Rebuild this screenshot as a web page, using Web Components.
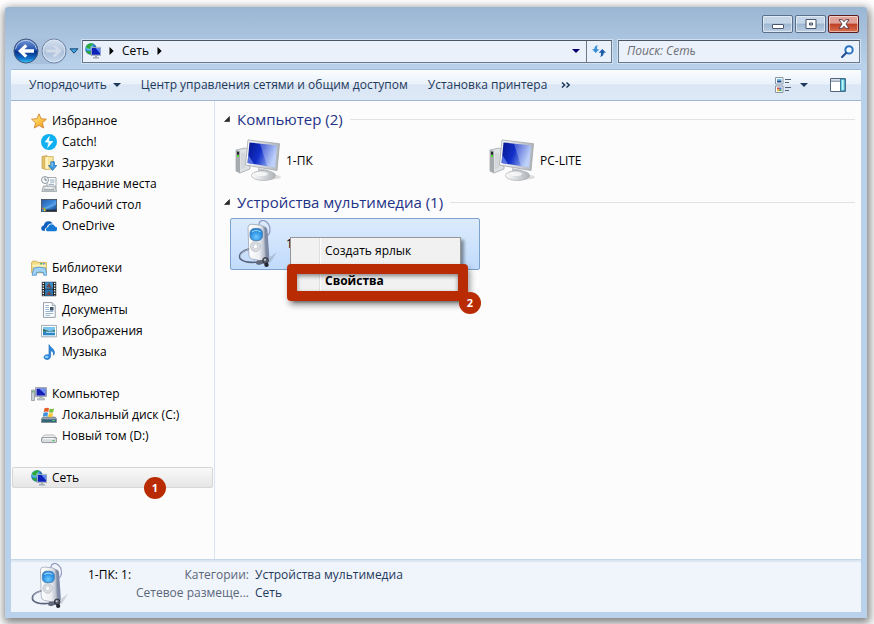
<!DOCTYPE html>
<html lang="ru">
<head>
<meta charset="utf-8">
<meta name="viewport" content="width=device-width">
<title>Сеть</title>
<style>
  html { height: 100%; }
  body {
    margin: 0; min-height: 100vh; box-sizing: border-box; padding: 7px 7px 6px 5px;
    display: flex; background: #fff; color: #000; overflow: hidden;
    font: 12px/16px "Open Sans", "Noto Sans", sans-serif;
  }
</style>
</head>
<body>
<explorer-window>
  <address-bar slot="address" place="Сеть"></address-bar>
  <command-bar slot="commands">
    <command-button menu>Упорядочить</command-button>
    <command-button>Центр управления сетями и общим доступом</command-button>
    <command-button>Установка принтера</command-button>
  </command-bar>
  <nav-tree slot="nav">
    <nav-group>
      <nav-item icon="star" root>Избранное</nav-item>
      <nav-item icon="bolt">Catch!</nav-item>
      <nav-item icon="downloads">Загрузки</nav-item>
      <nav-item icon="recent">Недавние места</nav-item>
      <nav-item icon="desktop">Рабочий стол</nav-item>
      <nav-item icon="cloud">OneDrive</nav-item>
    </nav-group>
    <nav-group>
      <nav-item icon="libraries" root>Библиотеки</nav-item>
      <nav-item icon="video">Видео</nav-item>
      <nav-item icon="document">Документы</nav-item>
      <nav-item icon="picture">Изображения</nav-item>
      <nav-item icon="music">Музыка</nav-item>
    </nav-group>
    <nav-group>
      <nav-item icon="pc" root>Компьютер</nav-item>
      <nav-item icon="sysdisk">Локальный диск (C:)</nav-item>
      <nav-item icon="disk">Новый том (D:)</nav-item>
    </nav-group>
    <nav-group>
      <nav-item icon="network" root selected>Сеть<step-badge slot="badge">1</step-badge></nav-item>
    </nav-group>
  </nav-tree>
  <file-list slot="content">
    <item-group heading="Компьютер (2)">
      <item-tile icon="monitor">1-ПК</item-tile>
      <item-tile icon="monitor">PC-LITE</item-tile>
    </item-group>
    <item-group heading="Устройства мультимедиа (1)">
      <item-tile icon="player" selected>1
        <context-menu slot="popup">
          <menu-entry>Создать ярлык</menu-entry>
          <menu-entry strong marked>Свойства<step-badge slot="badge">2</step-badge></menu-entry>
        </context-menu>
      </item-tile>
    </item-group>
  </file-list>
  <details-pane slot="details" icon="player" name="1-ПК: 1:">
    <detail-field label="Категории:">Устройства мультимедиа</detail-field>
    <detail-field label="Сетевое размеще...">Сеть</detail-field>
  </details-pane>
</explorer-window>

<script>
const ICONS = {
  star: ['0 0 16 16', `<defs><linearGradient id="g" x2="1" y2="1"><stop stop-color="#fff3a0"/><stop offset=".5" stop-color="#fcc94a"/><stop offset="1" stop-color="#f08a1c"/></linearGradient></defs>
    <path d="M8 .8l2.1 4.9 5.3.5-4 3.6 1.2 5.2L8 12.3 3.4 15l1.2-5.2-4-3.6 5.3-.5z" fill="url(#g)" stroke="#cf8430" stroke-width=".9" stroke-linejoin="round"/>`],
  bolt: ['0 0 16 16', `<circle cx="8" cy="8" r="8" fill="#0fb0f2"/><path d="M8.600 1.800L3.600 8.300l3.400.3-1 5.900 6.400-7.300-3.900-.1z" fill="#fff"/><path d="M10.200 1.600L8 7.100M7.300 8.600L5.500 14.500" stroke="#0fb0f2" stroke-width=".7"/>`],
  downloads: ['0 0 16 16', `<path d="M1 1.500l5-.9v13.900l-5-1.200z" fill="#e2c169" stroke="#b8923c" stroke-width=".6"/><path d="M3.500 1.500h8.800v12.800H3.500z" fill="#f8e59e" stroke="#cba950" stroke-width=".7"/><path d="M5 2.200h2v11.500H5z" fill="#fff4c2"/><path d="M9.800 6.800h3.600v3.700h2.400L11.600 15.400 7.400 10.500h2.400z" fill="#3f9be0" stroke="#1c66ae" stroke-width=".7"/><path d="M10.600 7.600h1v4h-1z" fill="#a4d8fa"/>`],
  recent: ['0 0 16 16', `<path d="M6 1.500h9v11H6z" fill="#fff" stroke="#8c959c" stroke-width=".8"/><path d="M9 4h4.500M9 6h4.500M7.500 8.300H13" stroke="#7f9bb2" stroke-width=".9"/><path d="M2.500 10h11.700l1.500 5.400H.8z" fill="#d3d8dc" stroke="#8b939a" stroke-width=".7"/><path d="M4.500 12h7" stroke="#fff"/><path d="M3 13.800h10" stroke="#8d969d"/><circle cx="4" cy="4" r="3.500" fill="#f5f8fa" stroke="#849099" stroke-width=".9"/><path d="M4 1.800V4.200h1.900" fill="none" stroke="#4f5b63" stroke-width=".8"/>`],
  desktop: ['0 0 16 16', `<defs><linearGradient id="g" x2="1" y2="1"><stop stop-color="#2357a4"/><stop offset=".55" stop-color="#3f8fe0"/><stop offset="1" stop-color="#143f86"/></linearGradient></defs><rect x=".4" y="2.400" width="15.200" height="12" fill="url(#g)" stroke="#434c56" stroke-width=".8"/><path d="M.8 11Q8 10 15.200 4v3.600Q9 12 .8 12z" fill="#78b9ef" opacity=".5"/><path d="M.5 12.600h15v1.900H.5z" fill="#252f3c"/><path d="M1 10.800h1.800v1.700H1z" fill="#e05f2b"/><path d="M2.800 10.800h1.800v1.700H2.800z" fill="#7ac043"/><path d="M1 12.500h1.800v1.700H1z" fill="#2ea2e8"/><path d="M2.800 12.500h1.800v1.700H2.800z" fill="#f8cc38"/>`],
  cloud: ['0 0 16 16', `<path d="M.2 10.600c0-1.800 1.200-2.800 2.600-3 .1-3 3-5 5.600-4.300 1.500.3 2.500 1 3.200 2.200-3.400-.4-5.400 1.800-5.800 4.100-1.500.4-2.300 1.900-1.900 3.500C1.400 13.100.2 12.300.2 10.600z" fill="#0e62bd"/><path d="M5 11.700c0-1.400 1-2.300 2.200-2.400.2-3.500 5.400-4.400 6.600-.9 1.500.1 2.400 1 2.400 2.400 0 1.600-1 2.500-2.500 2.500H6.800C5.700 13.300 5 12.700 5 11.700z" fill="#1479d4"/>`],
  libraries: ['0 0 16 16', `<path d="M.6 2.500l1-1.300h4l1 1.200h8.700v10.400H.6z" fill="#f6dc86" stroke="#c9a348" stroke-width=".8"/><path d="M1.300 4.600h13.400v2H1.300z" fill="#fff2bd"/><path d="M9 3h2v1.500H9z" fill="#59b75b"/><path d="M11.700 3h2v1.500h-2z" fill="#5a98d8"/><path d="M2.500 8.200Q8.500 6 14.500 8.200L16 15.200h-3.400v-2.500q-3.800-1.300-7.200 0v2.500H1.200z" fill="#9fd2f5" stroke="#4b8fca" stroke-width=".8"/>`],
  video: ['0 0 16 16', `<path d="M.8.8h14.400v14.400H.8z" fill="#25282b"/><path d="M4 1.200h8v6.500H4z" fill="#3b8ecb"/><path d="M4 8.500h8v6.300H4z" fill="#2b76b4"/><path d="M5 6l3-4 3 5z" fill="#704a48"/><path d="M5 14l3-4 3 4z" fill="#704a48"/><path d="M2.300 1.800v13M13.700 1.800v13" stroke="#fff" stroke-width="1.400" stroke-dasharray="1.300 1.200"/>`],
  document: ['0 0 16 16', `<path d="M2.500.6h8.700l3 3v11.800H2.500z" fill="#fff" stroke="#8993a0" stroke-width=".9"/><path d="M11.200.6v3h3" fill="#e0e6ee" stroke="#8993a0" stroke-width=".7"/><path d="M4.300 3.500H8M4.300 5.500H8M4.300 7.500H8M4.300 9.500h8M4.300 11.500h8M4.300 13.300h5" stroke="#7fa3c8" stroke-width=".8"/><path d="M9 5h3.500v3.500H9z" fill="#3f566d"/>`],
  picture: ['0 0 16 16', `<path d="M.4 2.400h15.200v11.400H.4z" fill="#fff" stroke="#8895a2" stroke-width=".8"/><path d="M2 4h12v4.500H2z" fill="#7cc4f0"/><path d="M2 6l3.500 1.200 3 1L14 7v1.800H2z" fill="#326b4e"/><path d="M2 8.600h12v3.700H2z" fill="#2a86c8"/><path d="M5 8.800h9v1H5z" fill="#bfe6fb"/>`],
  music: ['0 0 16 16', `<path d="M8 .6c.4 2.800 4.900 3.500 5.400 7.300.2 1.500-.3 2.600-1 3.400.4-2.500-.5-4-2.800-4.700v5.600c0 2-1.600 3.300-3.500 3.300-1.700 0-3.100-.9-3.100-2.400 0-1.800 2-2.800 4.200-2.300L8 10.800z" fill="#2a8be0" stroke="#1663b0" stroke-width=".6"/><ellipse cx="5.700" cy="12.900" rx="1.800" ry="1.200" fill="#8acbf8"/>`],
  pc: ['0 0 16 16', `<path d="M.5 4h3v10.500h-3z" fill="#c9ced4" stroke="#868d94" stroke-width=".7"/><path d="M1.300 5h1.300v1.500H1.300z" fill="#39a944"/><path d="M4.500 1.600h11v9h-11z" fill="#dfe4e9" stroke="#828a93" stroke-width=".8"/><path d="M5.500 2.600h9v7h-9z" fill="#151fb4"/><path d="M8 2.600h6.500v6z" fill="#708df0"/><path d="M8.700 11h2.600v1.500h2.200v1.500H6.500v-1.500h2.200z" fill="#c4c9ce" stroke="#8b9298" stroke-width=".5"/>`],
  sysdisk: ['0 0 16 16', `<path d="M2 10h12l1.600 2v3.500H.4V12z" fill="#98a3ad" stroke="#68727b" stroke-width=".7"/><path d="M1 12.300h14v2.700H1z" fill="#31657a"/><path d="M11.500 13h2v1h-2z" fill="#58e07c"/><path d="M3.500 1.300Q6 .1 8 1.200L7.300 5Q5 4 2.700 5z" fill="#e85c26"/><path d="M8.700 1.500q2.200 1 4.300.1l-.8 3.700q-2.200.9-4.200-.1z" fill="#7cbd3d"/><path d="M2.500 5.700q2.400-1 4.600 0l-.7 3.700q-2.200-1-4.500 0z" fill="#3d91dd"/><path d="M7.900 6q2 1 4.200.1l-.8 3.600q-2.200.9-4.200-.1z" fill="#f7c52e"/>`],
  disk: ['0 0 16 16', `<path d="M3.500 7h9.200l2.900 3.200H.5z" fill="#f2f3f4" stroke="#9a9fa4" stroke-width=".7"/><rect x=".5" y="9.600" width="15.200" height="5" rx="1.500" fill="#d8dbde" stroke="#7b8187" stroke-width=".8"/><path d="M2 10.700h11" stroke="#fff"/><path d="M11.500 12h2v1.200h-2z" fill="#40ba50"/>`],
  network: ['0 0 16 16', `<defs><radialGradient id="g" cx=".35" cy=".3"><stop stop-color="#d8f6ff"/><stop offset=".6" stop-color="#45b0e6"/><stop offset="1" stop-color="#1765a8"/></radialGradient></defs><circle cx="5.900" cy="5.900" r="5.800" fill="url(#g)"/><path d="M.8 3.600Q3 .3 7.500.3L8 1.500 6 3 5 5.800 2.500 5.500zM2.500 8l3.500.5-.3 2.700Q2.500 11 1.200 8.800z" fill="#2fa83a"/><path d="M6.100 4.300h9.800v8.200H6.100z" fill="#e6edf4" stroke="#7c8793" stroke-width=".6"/><path d="M6.800 5h8.400v6.800H6.800z" fill="#0f22b8"/><path d="M10.500 5h4.700v5.500z" fill="#6289f0"/><path d="M10 12.800h2v1.300h2v1.400H8v-1.400h2z" fill="#a2aab3"/>`],
  monitor: ['0 0 46 44', `<defs><linearGradient id="g" x1="0" x2="1" y2=".35"><stop stop-color="#04148c"/><stop offset=".5" stop-color="#1230c8"/><stop offset="1" stop-color="#a4bef8"/></linearGradient><linearGradient id="h" x2="1"><stop stop-color="#fdfdfd"/><stop offset="1" stop-color="#aeb3b8"/></linearGradient></defs>
    <ellipse cx="32" cy="38" rx="14" ry="3" fill="#000" opacity=".12"/><path d="M1 11l9-2 5 2v19L5 34l-4-2z" fill="#dfe2e4" stroke="#999fa3" stroke-width=".7"/><path d="M1 11l4 1v22l-4-2z" fill="#a5aaae"/><path d="M2 12.500l2 .5v3l-2-.5z" fill="#202426"/><path d="M2 15.800l2 .5v2l-2-.5z" fill="#53dc28"/><path d="M7 14v16M9 13.500V29" stroke="#c9cdd0"/>
    <path d="M23 29l10 2 1 5H23z" fill="#c4c8cb"/><ellipse cx="28.500" cy="36.500" rx="12" ry="5" fill="url(#h)" stroke="#9ea3a8" stroke-width=".6"/><ellipse cx="27" cy="35" rx="6" ry="2" fill="#fff" opacity=".7"/>
    <path d="M13 1l31.500 3.700L42 31.500 10.500 26z" fill="url(#h)" stroke="#a0a5aa" stroke-width=".8"/><path d="M14.500 3.400l27.500 3L40 28.500 12.500 24z" fill="url(#g)"/><path d="M25 4.600L42 6.400 40.100 28.500 32 27z" fill="#fff" opacity=".28"/><path d="M13.300 16L19 25l-6.500-1z" fill="#7490f3" opacity=".7"/>`],
  player: ['0 0 40 48', `<defs><linearGradient id="g" x2="1"><stop stop-color="#fff"/><stop offset=".65" stop-color="#eceef1"/><stop offset="1" stop-color="#a9b1c2"/></linearGradient><radialGradient id="h" cx=".5" cy=".7"><stop stop-color="#6fcbff"/><stop offset="1" stop-color="#2488de"/></radialGradient></defs>
    <path d="M28 40l11-8-7 11z" fill="#000" opacity=".14"/><path d="M21 9V3.500q1-3.500 5-3Q32 3 32 10q0 4-3 6" fill="none" stroke="#8d95bd" stroke-width="1.100"/>
    <path d="M24 6q5 .5 5.400 4l1.900 27q-.3 4-7.300 4z" fill="#7d88a4"/><path d="M10 7.500Q10 4 14 4.200l9 1Q26 5.600 26.200 9L27.500 38q0 3.500-3.500 3l-10-2q-3-.7-3.100-4z" fill="url(#g)" stroke="#9ba3b3" stroke-width=".8"/>
    <rect x="12" y="8.500" width="12.500" height="12" rx="4.500" fill="url(#h)" stroke="#4e7fae" stroke-width=".9"/><path d="M14 12q4-3 8.500 0" stroke="#9fd9fb" stroke-width="1.200" fill="none"/><circle cx="17.500" cy="26.500" r="5" fill="#d9dce0" stroke="#b8bdc5" stroke-width=".8"/><circle cx="17.500" cy="26.500" r="2.200" fill="#fff" stroke="#b6bcc5" stroke-width=".6"/>
    <path d="M11 29Q0 32 2 38.500q4 5 18 3.500" fill="none" stroke="#5a637c" stroke-width="1.700"/><path d="M11 29Q1 32 2.500 37.500" fill="none" stroke="#cfd5e2" stroke-width=".6"/><path d="M19 40.500l6-.5 2 3-6 2-3-1z" fill="#60687a"/><circle cx="27.500" cy="40.500" r="2.900" fill="#59616e" stroke="#23272f" stroke-width=".9"/><circle cx="27" cy="39.800" r="1" fill="#cdd3dc"/><circle cx="28.500" cy="44.800" r="2.200" fill="#23272f"/>`],
  back: ['0 0 26 26', `<defs><linearGradient id="g" y2="1" x2="0"><stop stop-color="#7899d2"/><stop offset=".48" stop-color="#1f4fae"/><stop offset=".5" stop-color="#062b80"/><stop offset=".8" stop-color="#116cc9"/><stop offset="1" stop-color="#39d0f4"/></linearGradient></defs><circle cx="13" cy="13" r="12" fill="url(#g)" stroke="#40577f"/><path d="M2.500 11a10.700 10.700 0 0121 0" stroke="#c4d9f5" fill="none" opacity=".8"/><path d="M5 13l7.200-6.800 2.200 2.200-3 2.800H21v3.600h-9.600l3 2.800-2.200 2.200z" fill="#fff"/>`],
  forward: ['0 0 26 26', `<defs><linearGradient id="g" y2="1" x2="0"><stop stop-color="#d5e0ef"/><stop offset=".49" stop-color="#b7c9e1"/><stop offset=".5" stop-color="#a9bdd9"/><stop offset="1" stop-color="#c8dbf0"/></linearGradient></defs><circle cx="13" cy="13" r="12" fill="url(#g)" stroke="#6f829f"/><circle cx="13" cy="13" r="10.900" fill="none" stroke="#dce8f6" opacity=".8"/><path d="M21 13l-7.200-6.800-2.200 2.200 3 2.800H5v3.600h9.600l-3 2.800 2.200 2.200z" fill="#d2dceb" stroke="#b6c4d8" stroke-width=".5"/>`],
  history: ['0 0 10 6', `<path d="M1 .8h8L5 5.200z" fill="#3aa4dc" stroke="#17406c" stroke-width=".9"/>`],
  right: ['0 0 5 8', `<path d="M.5 0v8L4.700 4z" fill="#000"/>`],
  down: ['0 0 8 4', `<path d="M0 0h8L4 4z" fill="currentColor"/>`],
  more: ['0 0 10 6', `<path d="M1 .5L3.700 3 1 5.500M5.500.5L8.200 3 5.500 5.500" fill="none" stroke="#16304f" stroke-width="1.400"/>`],
  refresh: ['0 0 14 12', `<path d="M6.500 0Q4.600.8 5 4.200H7.300L3.700 8 0 4.200h2.200Q2.400.4 6.500 0z" fill="#3a90d8"/><path d="M7.500 12q1.900-.8 1.500-4.200H6.700L10.300 4 14 7.800h-2.200q-.2 3.800-4.300 4.200z" fill="#1f5dab"/>`],
  search: ['0 0 12 12', `<circle cx="7.400" cy="4.500" r="3.400" fill="#f2f9ff" stroke="#2a72c0" stroke-width="1.800"/><path d="M4.900 7.100L1 11" stroke="#254f91" stroke-width="2" stroke-linecap="round"/>`],
  view: ['0 0 16 16', `<path d="M.5.500h7.500v6.500H.5zM.5 9h7.500v6.500H.5z" fill="#fff" stroke="#8796a6"/><path d="M2 2h4.500v1.500H2z" fill="#70bfee"/><path d="M2 3.500h4.500v2H2z" fill="#22508c"/><path d="M2 10.500h2.200v2H2z" fill="#de4437"/><path d="M4.200 10.500h2.300v2H4.200z" fill="#4b60d4"/><path d="M2 12.500h2.200v1.700H2z" fill="#e8b122"/><path d="M4.200 12.500h2.300v1.700H4.200z" fill="#3ca449"/><path d="M10 2.500h6M10 5.500h4M10 10.500h6M10 13.500h4" stroke="#516174"/>`],
  preview: ['0 0 16 14', `<path d="M.5.500h15v13H.5z" fill="#fff" stroke="#53667d"/><path d="M1 1h14v1.800H1z" fill="#d5dee9"/><path d="M1 3.200h9.500" stroke="#72859a"/><path d="M10.500 1H15v12h-4.500z" fill="#6dd3ea" stroke="#3a7c99"/><path d="M12 2h1.500v10H12z" fill="#c3f2fa"/>`],
  minimize: ['0 0 12 12', `<rect x=".5" y="6.500" width="11" height="4" rx=".5" fill="#fff" stroke="#49566b"/>`],
  maximize: ['0 0 12 12', `<path d="M1 1.500h10v9H1zM4.500 5v2h3V5z" fill="#fff" fill-rule="evenodd" stroke="#49566b"/>`],
  close: ['0 0 12 12', `<path d="M1 1.700h3.300L6 3.800l1.700-2.100H11L8 6l3 4.300H7.700L6 8.200l-1.700 2.100H1L4 6z" fill="#fff" stroke="#4d3a44" stroke-width=".9"/>`],
  expand: ['0 0 6 6', `<path d="M5.500.5v5h-5z" fill="#2b2b2b" stroke="#000" stroke-width=".5"/>`],
};

function define(tag, css, markup) {
  customElements.define(tag, class extends HTMLElement {
    constructor() {
      super();
      this.attachShadow({ mode: 'open' }).innerHTML =
        `<style>*{box-sizing:border-box}button,input{font:inherit;color:inherit;margin:0}button{border:0;padding:0;background:none}:host{box-sizing:border-box}${css}</style>` +
        (typeof markup === 'function' ? markup(this) : markup);
    }
  });
}
const attr = (el, name) => el.getAttribute(name) || '';

define('ui-icon', `:host{display:block;flex:none;width:16px;height:16px}svg{display:block;width:100%;height:100%}`,
  el => { const [box, art] = ICONS[attr(el, 'name')]; return `<svg viewBox="${box}" aria-hidden="true">${art}</svg>`; });

define('step-badge', `:host{display:grid;place-items:center;width:22px;height:22px;border-radius:50%;background:#b92b03;color:#fff;font-size:11px;font-weight:700}`, `<slot></slot>`);

define('explorer-window', `
  :host{flex:1;min-width:0;display:flex;flex-direction:column;padding:0 6px 6px;border-radius:3px 3px 0 0;
    background:linear-gradient(#9bb6d3,#b9d1ea 60px);box-shadow:1px 3px 10px 2px rgba(0,0,0,.5)}
  .caption{display:flex;justify-content:flex-end;gap:2px;padding:8px 2px 0 0}
  .caption button{display:grid;place-items:center;width:31px;height:18px;border:1px solid #5d708b;border-radius:2px;
    background:linear-gradient(#c5d6e8 45%,#9db6d0 50%,#bdd0e5);box-shadow:inset 0 0 0 1px rgba(255,255,255,.5)}
  .caption .close{border-color:#5b1c1d;background:linear-gradient(#e0a298 45%,#bf3f27 50%,#d8704d)}
  .caption ui-icon{width:12px;height:12px}
  .body{flex:1;display:grid;grid-template-columns:204px 1fr;background:#fcfcfc;min-height:0}
  .nav{border-right:1px solid #d6e5f5}`, `
  <div class="caption">
    <button aria-label="Свернуть"><ui-icon name="minimize"></ui-icon></button>
    <button aria-label="Развернуть"><ui-icon name="maximize"></ui-icon></button>
    <button class="close" aria-label="Закрыть"><ui-icon name="close"></ui-icon></button>
  </div>
  <slot name="address"></slot>
  <slot name="commands"></slot>
  <div class="body"><div class="nav"><slot name="nav"></slot></div><slot name="content"></slot></div>
  <slot name="details"></slot>`);

define('address-bar', `
  :host{display:flex;align-items:center;padding:5px 1px 5px 2px}
  .travel{display:flex;align-items:center;gap:2px;margin-right:3px}
  .travel .pair{display:flex;gap:2px;border-radius:13px;background:#a9c0dc}
  .travel ui-icon{width:26px;height:26px}
  .travel .history{width:10px;height:6px}
  .field{display:flex;align-items:center;height:23px;border:1px solid #6c7989;border-top-color:#4a5563;background:#ebf1fa;box-shadow:0 0 0 1px #cfe0f3}
  .path{flex:1}.crumbs{display:flex;flex:1;align-items:center;gap:8px;padding-left:2px}
  .crumbs .arrow{width:5px;height:8px}
  .drop{color:#03006e;padding:0 6px}.drop ui-icon{width:8px;height:4px}
  .refresh{align-self:stretch;width:25px;border-left:1px solid #6c7989;display:grid;place-items:center}
  .refresh ui-icon{width:14px;height:12px}
  form{width:242px;margin-left:6px;padding:0 5px 0 8px}
  input{flex:1;min-width:0;border:0;padding:0;background:none;outline:0;font-style:italic}
  input::placeholder{color:#6c6f75;opacity:1}
  form ui-icon{width:13px;height:13px}`, el => `
  <div class="travel"><div class="pair"><button aria-label="Назад"><ui-icon name="back"></ui-icon></button><button aria-label="Вперед"><ui-icon name="forward"></ui-icon></button></div>
    <button aria-label="Последние страницы"><ui-icon class="history" name="history"></ui-icon></button></div>
  <div class="field path"><div class="crumbs"><ui-icon name="network"></ui-icon><ui-icon class="arrow" name="right"></ui-icon><button>${attr(el, 'place')}</button><ui-icon class="arrow" name="right"></ui-icon></div>
    <button class="drop" aria-label="Предыдущие адреса"><ui-icon name="down"></ui-icon></button><button class="refresh" aria-label="Обновить"><ui-icon name="refresh"></ui-icon></button></div>
  <form class="field" role="search"><input type="text" aria-label="Поиск" placeholder="Поиск: ${attr(el, 'place')}"><ui-icon name="search"></ui-icon></form>`);

define('command-bar', `
  :host{display:flex;align-items:center;gap:20px;height:32px;padding:0 15px 0 18px;color:#1e395b;
    border-top:1px solid #9db8d6;border-bottom:1px solid #a0b5cf;background:linear-gradient(#fbfdff,#eaf2fb 45%,#dae6f4 50%,#dee9f7)}
  .more ui-icon{width:10px;height:6px}.more{margin-left:-6px}
  .tools{margin-left:auto;display:flex;align-items:center;gap:22px}
  .view{display:flex;align-items:center;gap:9px}.view .drop{width:8px;height:4px}
  .preview{width:16px;height:14px}`, `
  <slot></slot><button class="more" aria-label="Дополнительно"><ui-icon name="more"></ui-icon></button>
  <div class="tools"><button class="view" aria-label="Изменить представление"><ui-icon name="view"></ui-icon><ui-icon class="drop" name="down"></ui-icon></button>
  <button aria-label="Область просмотра"><ui-icon class="preview" name="preview"></ui-icon></button></div>`);

define('command-button', `:host{display:block}button{display:flex;align-items:center;gap:6px;white-space:nowrap}ui-icon{width:8px;height:4px}`,
  el => `<button><slot></slot>${el.hasAttribute('menu') ? '<ui-icon name="down"></ui-icon>' : ''}</button>`);

define('nav-tree', `:host{display:flex;flex-direction:column;gap:21px;padding:9px 1px}`, `<slot></slot>`);
define('nav-group', `:host{display:block}`, `<slot></slot>`);
define('nav-item', `
  :host{display:block;position:relative}
  a{display:flex;align-items:center;gap:5px;height:21px;padding-left:28px;border:1px solid transparent;border-radius:2px;color:inherit;text-decoration:none;white-space:nowrap}
  :host([root]) a{padding-left:18px}
  :host([selected]) a{border-color:#d6d6d6;background:linear-gradient(#f9f9f9,#e6e6e6)}
  ::slotted(step-badge){position:absolute;left:132px;top:10px}`,
  el => `<a href="#"><ui-icon name="${attr(el, 'icon')}"></ui-icon><span><slot></slot></span></a><slot name="badge"></slot>`);

define('file-list', `:host{display:flex;flex-direction:column;gap:4px;padding:8px 6px 0 9px;min-width:0}`, `<slot></slot>`);
define('item-group', `
  :host{display:block}
  h2{display:flex;align-items:center;gap:7px;margin:0;height:20px;font-size:15px;line-height:20px;font-weight:400;color:#1e3287;white-space:nowrap}
  h2::after{content:"";flex:1;height:1px;background:#e2e2e2}
  h2 ui-icon{width:6px;height:6px}
  .tiles{display:grid;grid-template-columns:repeat(auto-fill,250px);gap:4px;padding:6px 0 1px 6px}`,
  el => `<h2><ui-icon name="expand"></ui-icon>${attr(el, 'heading')}</h2><div class="tiles"><slot></slot></div>`);
define('item-tile', `
  :host{display:flex;align-items:center;gap:5px;position:relative;height:52px;padding-left:4px;border:1px solid transparent;border-radius:2px}
  :host([selected]){border-color:#7da2ce;background:linear-gradient(#dcebfc,#c1dbfc)}
  ui-icon{width:46px;height:44px}
  :host([icon=player]) ui-icon{height:48px}
  ::slotted(context-menu){position:absolute;left:59px;top:18px}`,
  el => `<ui-icon name="${attr(el, 'icon')}"></ui-icon><span><slot></slot></span><slot name="popup"></slot>`);

define('context-menu', `
  :host{display:flex;flex-direction:column;width:171px;border:1px solid #979797;box-shadow:3px 3px 3px rgba(0,0,0,.4);
    background:linear-gradient(90deg,#f1f1f1 28px,#e0e0e0 28px,#e0e0e0 29px,#fff 29px,#fff 30px,#f1f1f1 30px)}`,
  `<div role="menu"><slot></slot></div>`);
define('menu-entry', `
  :host{display:block;position:relative}
  button{display:block;width:100%;height:26px;padding-left:34px;text-align:left}
  :host([strong]) button{font-weight:700;height:34px}
  .mark{position:absolute;left:-4px;right:-8px;top:0;height:37px;border:10px solid #b92b03;border-radius:4px;box-shadow:2px 4px 6px rgba(0,0,0,.4),inset 0 2px 4px rgba(0,0,0,.45);pointer-events:none}
  ::slotted(step-badge){position:absolute;right:-21px;top:28px}`,
  el => `<button role="menuitem"><slot></slot></button>${el.hasAttribute('marked') ? '<div class="mark"></div>' : ''}<slot name="badge"></slot>`);

define('details-pane', `
  :host{display:flex;height:53px;padding:3px 16px 0 19px;background:#f0f4fb;border-top:1px solid #c8d8e9;box-shadow:inset 0 2px 1px #dce6f3}
  ui-icon{width:40px;height:46px}
  .name{width:48px;margin:4px 0 0 18px;white-space:nowrap}
  dl{margin:4px 0 0;display:grid;grid-template-columns:auto auto;gap:2px 6px;align-content:start}`,
  el => `<ui-icon name="${attr(el, 'icon')}"></ui-icon><div class="name">${attr(el, 'name')}</div><dl><slot></slot></dl>`);
define('detail-field', `
  :host{display:grid;grid-column:1/-1;grid-template-columns:subgrid}
  dt{text-align:right;color:#5a6779}dd{margin:0;color:#1e395b}`,
  el => `<dt>${attr(el, 'label')}</dt><dd><slot></slot></dd>`);
</script>
</body>
</html>
